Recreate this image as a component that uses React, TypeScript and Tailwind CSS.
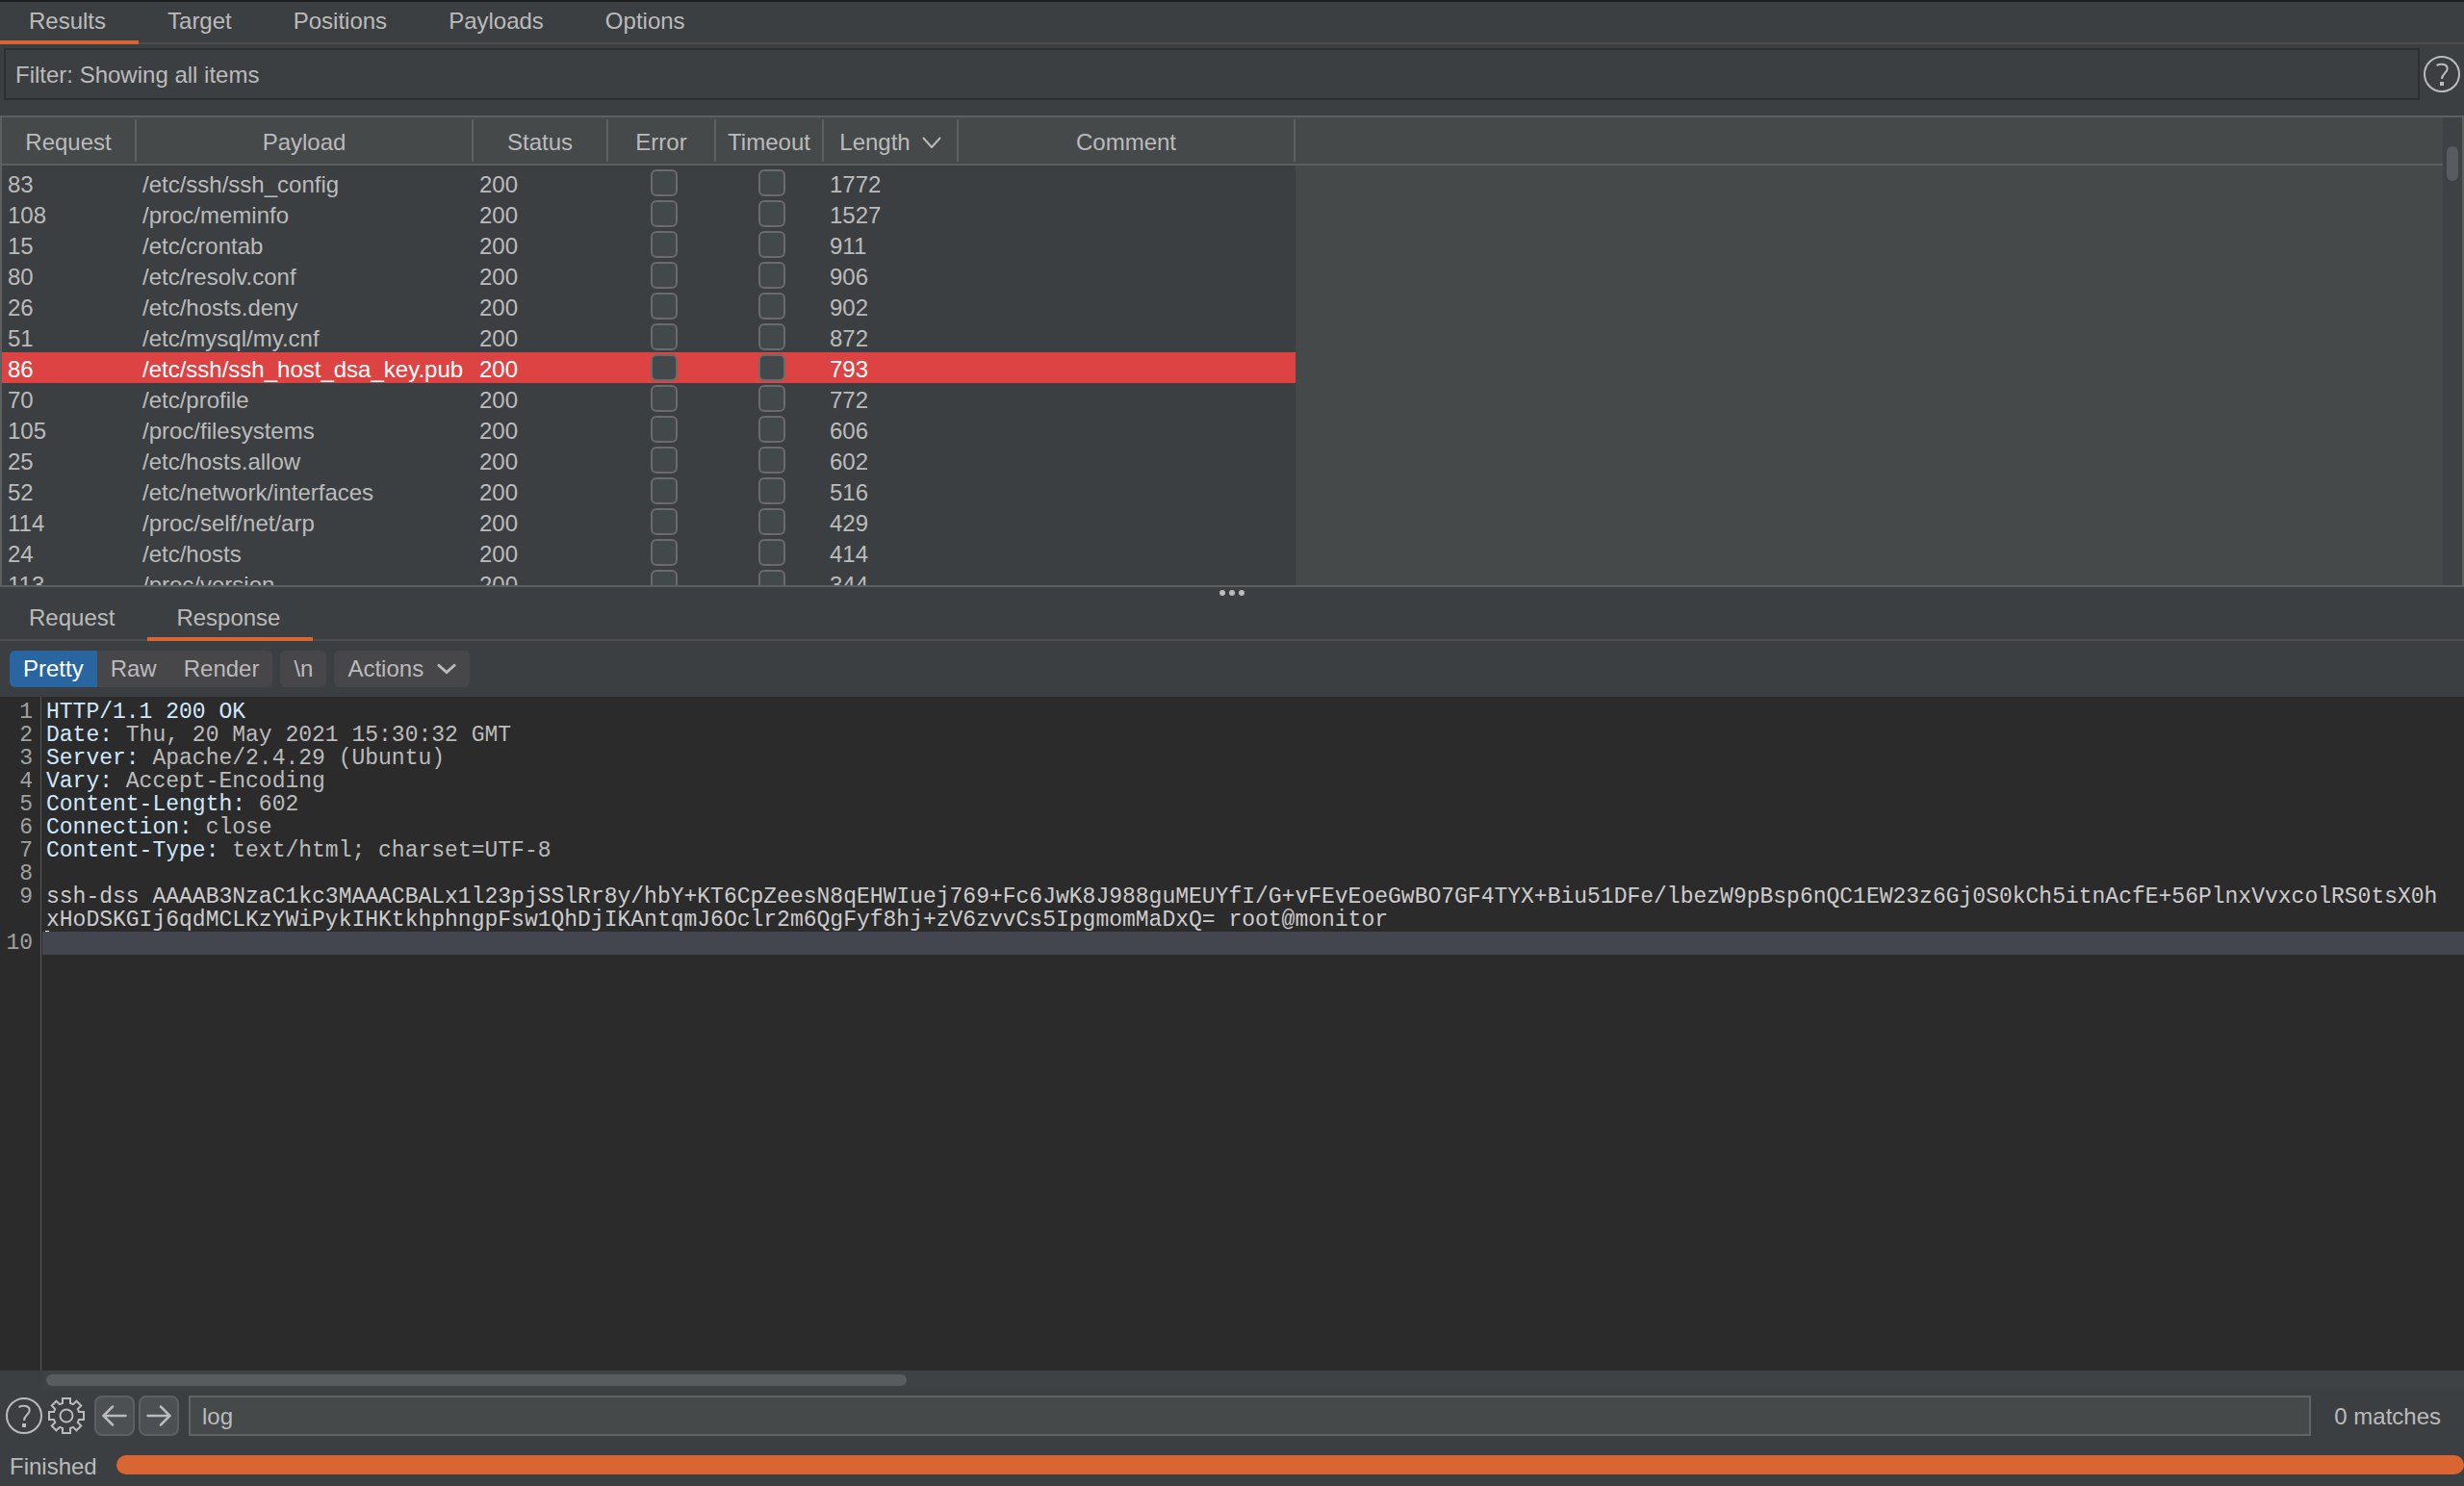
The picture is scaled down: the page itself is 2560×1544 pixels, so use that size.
import { useState } from 'react'

interface rowType {
  request: string
  payload: string
  length: string
}

const rows: rowType[] = [
  { request: '83', payload: '/etc/ssh/ssh_config', length: '1772' },
  { request: '108', payload: '/proc/meminfo', length: '1527' },
  { request: '15', payload: '/etc/crontab', length: '911' },
  { request: '80', payload: '/etc/resolv.conf', length: '906' },
  { request: '26', payload: '/etc/hosts.deny', length: '902' },
  { request: '51', payload: '/etc/mysql/my.cnf', length: '872' },
  { request: '86', payload: '/etc/ssh/ssh_host_dsa_key.pub', length: '793' },
  { request: '70', payload: '/etc/profile', length: '772' },
  { request: '105', payload: '/proc/filesystems', length: '606' },
  { request: '25', payload: '/etc/hosts.allow', length: '602' },
  { request: '52', payload: '/etc/network/interfaces', length: '516' },
  { request: '114', payload: '/proc/self/net/arp', length: '429' },
  { request: '24', payload: '/etc/hosts', length: '414' },
  { request: '113', payload: '/proc/version', length: '344' },
]

const columns = ['Request', 'Payload', 'Status', 'Error', 'Timeout', 'Length', 'Comment']

interface lineType {
  no: string
  name?: string
  value?: string
}

const lines: lineType[] = [
  { no: '1', name: 'HTTP/1.1 200 OK' },
  { no: '2', name: 'Date:', value: ' Thu, 20 May 2021 15:30:32 GMT' },
  { no: '3', name: 'Server:', value: ' Apache/2.4.29 (Ubuntu)' },
  { no: '4', name: 'Vary:', value: ' Accept-Encoding' },
  { no: '5', name: 'Content-Length:', value: ' 602' },
  { no: '6', name: 'Connection:', value: ' close' },
  { no: '7', name: 'Content-Type:', value: ' text/html; charset=UTF-8' },
  { no: '8' },
]

const bodyLines = [
  'ssh-dss AAAAB3NzaC1kc3MAAACBALx1l23pjSSlRr8y/hbY+KT6CpZeesN8qEHWIuej769+Fc6JwK8J988guMEUYfI/G+vFEvEoeGwBO7GF4TYX+Biu51DFe/lbezW9pBsp6nQC1EW23z6Gj0S0kCh5itnAcfE+56PlnxVvxcolRS0tsX0h',
  'xHoDSKGIj6qdMCLKzYWiPykIHKtkhphngpFsw1QhDjIKAntqmJ6Oclr2m6QgFyf8hj+zV6zvvCs5IpgmomMaDxQ= root@monitor',
]

const HelpIcon = () => (
  <svg width="38" height="38" viewBox="0 0 38 38" fill="none" stroke="#bbbbbb" strokeWidth="2">
    <circle cx="19" cy="19" r="18" />
    <path d="M13.5 10c1.500-.8 3.200-1.200 5.200-1.200 3.700 0 6 1.600 6 4.500 0 4.600-5.700 5-5.700 10.700" />
    <path d="M19 27v4" strokeWidth="4" />
  </svg>
)

const GearIcon = () => (
  <svg width="38" height="38" viewBox="0 0 38 38" fill="none" stroke="#bbbbbb" strokeWidth="2">
    <path d="M15 1h8v5l3 1.200 3.500-3.500 4.800 4.800-3.500 3.500 1.200 3H37v8h-5l-1.200 3 3.500 3.500-4.800 4.800-3.500-3.500-3 1.200v5h-8v-5l-3-1.200-3.500 3.500-4.800-4.800 3.500-3.500L6 23H1v-8h5l1.200-3-3.500-3.500 4.800-4.800L12 7.200 15 6z" />
    <circle cx="19" cy="19" r="6.500" />
  </svg>
)

const ArrowIcon = ({ right = false }: { right?: boolean }) => (
  <svg
    width="26"
    height="24"
    viewBox="0 0 26 24"
    fill="none"
    stroke="#bbbbbb"
    strokeWidth="2.500"
    strokeLinecap="round"
  >
    {right ? <path d="M1.500 12H24M15 2.500l9.500 9.500-9.500 9.500" /> : <path d="M24.500 12H2M11 2.500L1.500 12l9.500 9.500" />}
  </svg>
)

const Tabs = ({ items, initial }: { items: string[]; initial: string }) => {
  const [active, setActive] = useState(initial)
  return (
    <div role="tablist" className="flex shrink-0 border-b-2 border-[#4e4d4c]">
      {items.map((item) => (
        <button
          key={item}
          type="button"
          role="tab"
          aria-selected={item === active}
          onClick={() => setActive(item)}
          className={`-mb-0.5 h-11 border-b-4 pr-[34px] pl-[30px] ${
            item === active ? 'border-[#d96532]' : 'border-transparent'
          }`}
        >
          {item}
        </button>
      ))}
    </div>
  )
}

const ResultsTable = () => (
  <div className="flex h-[490px] shrink-0 border-2 border-[#5e6060] bg-[#45494a]">
    <div className="min-w-0 flex-1 overflow-hidden">
      <table className="w-full table-fixed border-separate border-spacing-0 text-left">
        <colgroup>
          <col className="w-[140px]" />
          <col className="w-[350px]" />
          <col className="w-[140px]" />
          <col className="w-28" />
          <col className="w-28" />
          <col className="w-[140px]" />
          <col className="w-[350px]" />
          <col />
        </colgroup>
        <thead>
          <tr>
            {columns.map((column) => (
              <th key={column} className="border-b-2 border-[#5e6060] px-0 py-0.5 font-normal">
                <div className="flex h-11 items-center justify-center gap-3 border-r-2 border-[#5e6060] pt-1">
                  {column}
                  {column === 'Length' && (
                    <svg width="20" height="12" viewBox="0 0 20 12" fill="none" stroke="#bbbbbb" strokeWidth="2">
                      <path d="M1 1l9 10 9-10" />
                    </svg>
                  )}
                </div>
              </th>
            ))}
            <td className="border-b-2 border-[#5e6060] p-0" />
          </tr>
        </thead>
        <tbody className="leading-7">
          <tr>
            <td colSpan={7} className="h-0.5 bg-[#3c3f41] p-0" />
            <td className="p-0" />
          </tr>
          {rows.map((row) => (
            <tr
              key={row.request}
              className={row.request === '86' ? 'bg-[#de4343] text-white' : 'bg-[#3c3f41]'}
            >
              <td className="p-0 pt-1 pl-1.5">{row.request}</td>
              <td className="p-0 pt-1 pl-1.5 whitespace-nowrap">{row.payload}</td>
              <td className="p-0 pt-1 pl-1.5">200</td>
              {['Error', 'Timeout'].map((flag) => (
                <td key={flag} className="p-0 pl-11">
                  <input
                    type="checkbox"
                    aria-label={`${flag} ${row.request}`}
                    className="block size-7 appearance-none rounded-md border-2 border-[#6b6b6b] bg-[#43494a]"
                  />
                </td>
              ))}
              <td className="p-0 pt-1 pl-1.5">{row.length}</td>
              <td className="p-0" />
              <td className="bg-[#45494a] p-0" />
            </tr>
          ))}
        </tbody>
      </table>
    </div>
    <div className="w-5 bg-[#3f4244] px-1 pt-[30px]">
      <div className="h-9 rounded-full bg-[#585c5f]" />
    </div>
  </div>
)

const Toolbar = () => (
  <div className="flex shrink-0 gap-2 px-2.5 py-2.5">
    <div className="flex h-[38px] overflow-hidden rounded-md bg-[#47474a]">
      <button type="button" className="bg-[#2965a0] px-3.5 text-white">
        Pretty
      </button>
      <button type="button" className="px-3.5">
        Raw
      </button>
      <button type="button" className="px-3.5">
        Render
      </button>
    </div>
    <button type="button" className="h-[38px] rounded-md bg-[#47474a] px-3.5">
      {'\\n'}
    </button>
    <button type="button" className="flex h-[38px] items-center gap-3.5 rounded-md bg-[#47474a] px-3.5">
      Actions
      <svg width="20" height="12" viewBox="0 0 20 12" fill="none" stroke="#bbbbbb" strokeWidth="3">
        <path d="M1 1.500l9 8 9-8" />
      </svg>
    </button>
  </div>
)

const Editor = () => (
  <div className="flex min-h-0 flex-1 overflow-hidden bg-[#2b2b2b] font-['Liberation_Mono',monospace] text-[23px] leading-6 whitespace-pre">
    <div className="w-[43px] shrink-0 border-r border-[#5a5a5a] pt-1 pr-2 text-right text-[#a0a0a0]">
      {lines.map((line) => (
        <div key={line.no}>{line.no}</div>
      ))}
      <div className="h-12">9</div>
      <div>10</div>
    </div>
    <div className="min-w-0 flex-1 overflow-hidden pt-1 pl-px">
      {lines.map((line) => (
        <div key={line.no} className="h-6 pl-1">
          <span className="text-[#cfe8fc]">{line.name}</span>
          {line.value}
        </div>
      ))}
      {bodyLines.map((line) => (
        <div key={line} className="pl-1 text-[#cccccc]">
          {line}
        </div>
      ))}
      <div className="relative h-6 bg-[#43464f]">
        <span className="absolute -top-px left-[3px] h-px w-1 bg-white" />
      </div>
    </div>
  </div>
)

const SearchBar = () => (
  <div className="flex shrink-0 items-center pt-1.5 pr-6 pl-1.5">
    <button type="button" aria-label="Help">
      <HelpIcon />
    </button>
    <button type="button" aria-label="Settings" className="ml-1.5">
      <GearIcon />
    </button>
    <button
      type="button"
      aria-label="Previous match"
      className="ml-2.5 flex size-[42px] items-center justify-center rounded-lg border-2 border-[#5e6060] bg-[#4c5052]"
    >
      <ArrowIcon />
    </button>
    <button
      type="button"
      aria-label="Next match"
      className="ml-1 flex size-[42px] items-center justify-center rounded-lg border-2 border-[#5e6060] bg-[#4c5052]"
    >
      <ArrowIcon right />
    </button>
    <input
      type="text"
      aria-label="Search"
      defaultValue="log"
      className="mr-6 ml-2.5 h-[42px] min-w-0 flex-1 border-2 border-[#646464] bg-[#45494a] px-3 pt-0.5 outline-none"
    />
    <span className="pt-0.5">0 matches</span>
  </div>
)

export default function App() {
  return (
    <div className="flex h-screen flex-col overflow-hidden bg-[#3c3f41] font-['Liberation_Sans',sans-serif] text-2xl leading-8 text-[#bbbbbb]">
      <div className="h-0.5 shrink-0 bg-[#1b1d1f]" />
      <Tabs items={['Results', 'Target', 'Positions', 'Payloads', 'Options']} initial="Results" />
      <div className="mt-1 mb-4 flex shrink-0 items-center gap-1 px-1">
        <button type="button" className="h-[54px] flex-1 border-2 border-[#2d2f30] px-2.5 pt-0.5 text-left">
          Filter: Showing all items
        </button>
        <button type="button" aria-label="Help">
          <HelpIcon />
        </button>
      </div>
      <ResultsTable />
      <div className="flex h-3 shrink-0 items-center justify-center gap-1">
        <span className="size-1.5 rounded-full bg-[#bbbbbb]" />
        <span className="size-1.5 rounded-full bg-[#bbbbbb]" />
        <span className="size-1.5 rounded-full bg-[#bbbbbb]" />
      </div>
      <Tabs items={['Request', 'Response']} initial="Response" />
      <Toolbar />
      <Editor />
      <div className="ml-11 shrink-0 bg-[#3f4244] p-1">
        <div className="h-3 w-[894px] rounded-full bg-[#585c5f]" />
      </div>
      <SearchBar />
      <div className="flex shrink-0 items-center gap-5 pt-3 pb-1 pl-2.5">
        <span className="pt-1">Finished</span>
        <div className="h-5 flex-1 rounded-full bg-[#d96532]" />
      </div>
    </div>
  )
}
